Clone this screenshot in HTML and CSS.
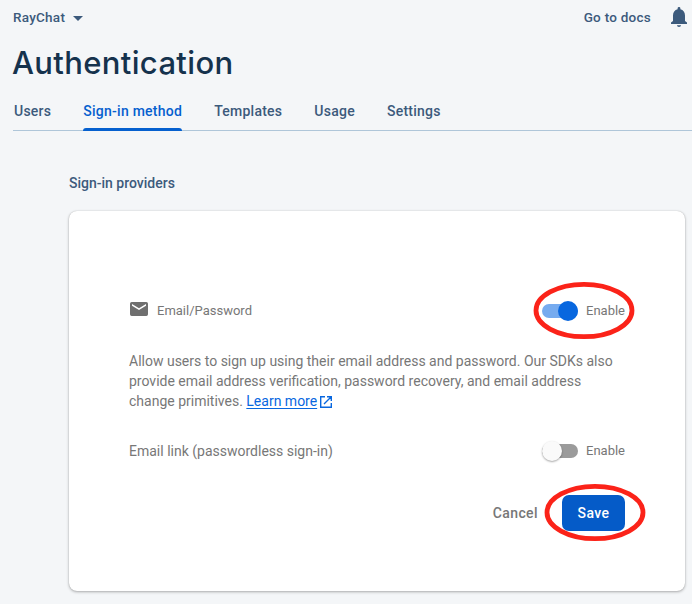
FILE: index.html
```html
<!DOCTYPE html>
<html lang="en">
<head>
<meta charset="utf-8">
<title>Authentication</title>
<link rel="stylesheet" href="styles.css">
</head>
<body>
<header class="topbar">
  <div class="project">RayChat<svg class="caret" viewBox="0 0 10 5"><path d="M0 0h10L5 5z"/></svg></div>
  <div class="docs">Go to docs</div>
  <svg class="bell" viewBox="0 0 16 20"><path d="M8 20c1.100 0 2-.8 2-1.700H6C6 19.200 6.900 20 8 20zM14 14V8.500C14 5.400 12.300 2.900 9.400 2.200V1.500a1.400 1.400 0 0 0-2.800 0v.7C3.700 2.900 2 5.400 2 8.500V14L0 15.500V17h16v-1.500z"/></svg>
</header>
<h1 class="title">Authentication</h1>
<nav class="tabs">
  <a class="tab">Users</a>
  <a class="tab active">Sign-in method</a>
  <a class="tab">Templates</a>
  <a class="tab">Usage</a>
  <a class="tab">Settings</a>
</nav>
<main class="content">
  <h2 class="section">Sign-in providers</h2>
  <section class="card">
    <div class="row">
      <svg class="mail" viewBox="0 0 18 14"><path fill-rule="evenodd" d="M1.700 0h14.600Q18 0 18 1.700v10.600q0 1.700-1.700 1.700H1.700Q0 14 0 12.300V1.700Q0 0 1.700 0zM2 2v1.700L9 8l7-4.300V2L9 6.300z"/></svg>
      <span class="provider">Email/Password</span>
      <div class="control">
        <span class="switch on"></span><span class="enable">Enable</span>
        <svg class="ring" viewBox="0 0 104 60"><ellipse cx="52" cy="29.500" rx="48" ry="26.200"/></svg>
      </div>
    </div>
    <p class="description">Allow users to sign up using their email address and password. Our SDKs also<br>provide email address verification, password recovery, and email address<br>change primitives. <a class="learn">Learn more</a><svg class="external" viewBox="0 0 12 12"><path d="M5 .7H.7v10.600h10.600V7M7 .7h4.300V5M11 1L4 8"/></svg></p>
    <div class="row link-row">
      <span class="link-name">Email link (passwordless sign-in)</span>
      <div class="control"><span class="switch"></span><span class="enable">Enable</span></div>
    </div>
    <div class="actions">
      <span class="cancel">Cancel</span>
      <div class="save-wrap">
        <button class="save">Save</button>
        <svg class="ring save-ring" viewBox="0 0 104 60"><ellipse cx="52" cy="29.500" rx="48" ry="26.200"/></svg>
      </div>
    </div>
  </section>
</main>
</body>
</html>
```

FILE: styles.css
```css
* { box-sizing: border-box; }
body {
  margin: 0;
  height: 604px;
  overflow: hidden;
  background: #f4f6f8;
  color: #3c5a7c;
  font: 14px/20px Roboto, sans-serif;
}
svg { display: block; fill: currentColor; flex: none; }
.topbar { display: flex; align-items: center; height: 34px; padding: 0 5px 0 13px; font-weight: 500; }
.project { display: flex; align-items: center; margin-right: auto; font-size: 13.500px; letter-spacing: .25px; }
.caret { width: 10px; height: 5px; margin-left: 8px; margin-top: 2px; }
.docs { font-size: 13.500px; letter-spacing: .25px; }
.bell { width: 16px; height: 20px; margin-left: 20px; }
.title { margin: 0 0 0 12px; height: 58px; font: 500 31px/58px Inter, sans-serif; color: #15324d; letter-spacing: .35px; }
.tabs { display: flex; gap: 32px; height: 39px; margin-left: 13px; padding-left: 1px; border-bottom: 1px solid #afc6d9; }
.tab { position: relative; height: 39px; line-height: 39px; font-weight: 500; letter-spacing: .25px; }
.active { color: #0560cf; }
.active::after { content: ""; position: absolute; left: 0; right: 0; bottom: 0; height: 3px; background: #0560cf; border-radius: 3px 3px 0 0; }
.content { padding: 42px 7px 0 69px; }
.section { margin: 0 0 18px; font-size: 14px; line-height: 20px; font-weight: 500; letter-spacing: 0; }
.card { width: 616px; height: 380px; padding: 90px 60px 0; background: #fff; border-radius: 8px; box-shadow: 0 1px 3px rgba(0,0,0,.3), 0 0 1px rgba(0,0,0,.22); color: #777; }
.row { display: flex; align-items: center; height: 20px; }
.mail { width: 18px; height: 14px; margin: -4px 0 0 1px; color: #6f6f6f; }
.provider { margin-left: 9px; font-size: 13px; letter-spacing: 0; }
.control { position: relative; display: flex; align-items: center; margin-left: auto; }
.switch { position: relative; width: 36px; height: 14px; border-radius: 7px; background: #9b9b9b; }
.switch::before { content: ""; position: absolute; top: -3px; left: 0; width: 20px; height: 20px; border-radius: 50%; background: #fafafa; box-shadow: 0 1px 2px rgba(0,0,0,.35); }
.switch.on { background: #76abef; }
.switch.on::before { left: 16px; background: #0867df; box-shadow: none; }
.enable { width: 39px; margin-left: 8px; font-size: 13px; white-space: nowrap; }
.ring { position: absolute; left: -10px; top: -20px; width: 104px; height: 60px; fill: none; stroke: #fb2319; stroke-width: 4.800px; pointer-events: none; }
.description { margin: 30px 0 0; white-space: nowrap; letter-spacing: 0; }
.learn { color: #0867df; text-decoration: underline; text-underline-offset: 2px; }
.external { display: inline-block; width: 12px; height: 12px; margin-left: 3px; vertical-align: -2px; fill: none; stroke: #0867df; stroke-width: 1.400; }
.link-row { margin-top: 30px; }
.actions { display: flex; align-items: center; justify-content: flex-end; height: 36px; margin-top: 34px; }
.cancel { font-weight: 500; letter-spacing: .4px; margin-right: 24px; }
.save-wrap { position: relative; }
.save { display: block; width: 63px; height: 36px; padding: 0; border: 0; border-radius: 7px; background: #055bc8; color: #fff; font: 500 14px/36px Roboto, sans-serif; letter-spacing: .4px; }
.save-ring { left: -19px; top: -12px; }
```
